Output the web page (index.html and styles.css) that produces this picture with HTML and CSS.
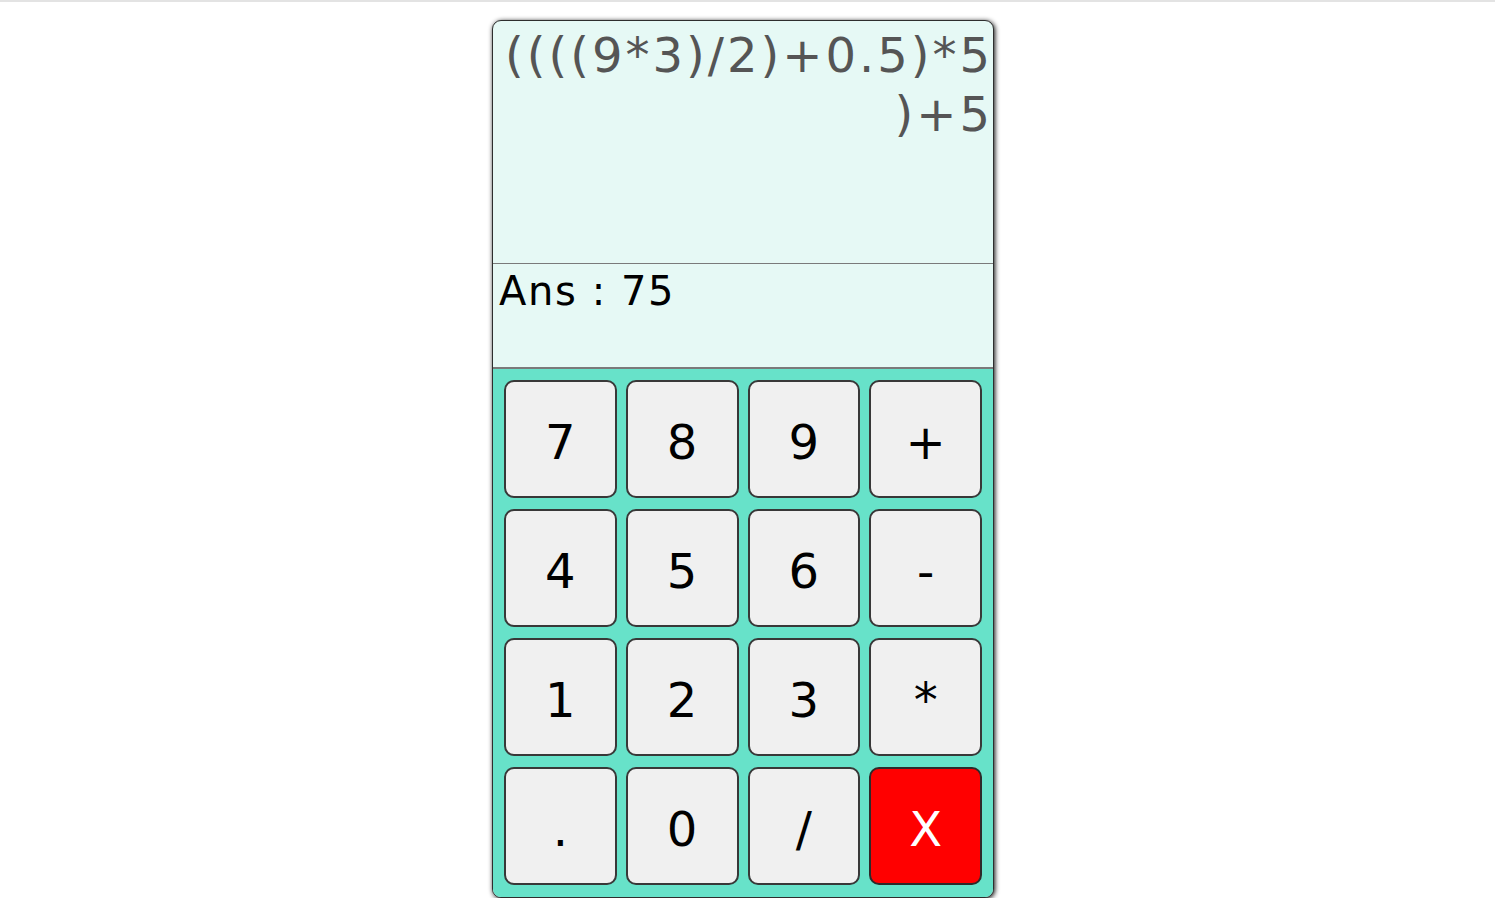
FILE: index.html
```html
<!DOCTYPE html>
<html lang="en">
<head>
<meta charset="utf-8">
<title>Calculator</title>
<link rel="stylesheet" href="styles.css">
</head>
<body>
<div class="topline"></div>
<div class="calc">
  <div class="expr">((((9*3)/2)+0.5)*5)+5</div>
  <div class="ans">Ans : 75</div>
  <div class="keypad">
    <button class="key">7</button>
    <button class="key">8</button>
    <button class="key">9</button>
    <button class="key">+</button>
    <button class="key">4</button>
    <button class="key">5</button>
    <button class="key">6</button>
    <button class="key">-</button>
    <button class="key">1</button>
    <button class="key">2</button>
    <button class="key">3</button>
    <button class="key">*</button>
    <button class="key">.</button>
    <button class="key">0</button>
    <button class="key">/</button>
    <button class="key key-clear">X</button>
  </div>
</div>
</body>
</html>
```
FILE: styles.css
```css
html, body {
  margin: 0;
  padding: 0;
  background: #ffffff;
}

body {
  font-family: "DejaVu Sans", Verdana, sans-serif;
}

.topline {
  height: 2px;
  background: #e3e3e3;
}

.calc {
  width: 500px;
  margin: 18px 0 0 492px;
  border: 1px solid #2e2e2e;
  border-radius: 9px;
  overflow: hidden;
  box-shadow: 1px 1px 5px rgba(0, 0, 0, 0.95);
  display: flex;
  flex-direction: column;
  background: #e6f9f5;
}

.expr {
  height: 243px;
  box-sizing: border-box;
  padding: 5px 0 0 6px;
  border-bottom: 1px solid #7a7a7a;
  font-size: 48px;
  line-height: 59px;
  letter-spacing: 3px;
  color: #555555;
  text-align: right;
  word-break: break-all;
  line-break: anywhere;
}

.ans {
  height: 105px;
  box-sizing: border-box;
  padding: 4px 0 0 6px;
  border-bottom: 2px solid #7a7a7a;
  font-size: 40px;
  line-height: 46px;
  letter-spacing: 1.6px;
  color: #000000;
}

.keypad {
  display: grid;
  grid-template-columns: repeat(4, 1fr);
  grid-template-rows: repeat(4, 118px);
  gap: 11px 9px;
  padding: 11px 11px 12px 11px;
  background: #67e2c9;
}

.key {
  margin: 0;
  padding: 6px 0 0 0;
  border: 2px solid #383838;
  border-radius: 10px;
  background: #f0f0f0;
  color: #000000;
  font-family: "DejaVu Sans", Verdana, sans-serif;
  font-size: 48px;
  line-height: 1;
  cursor: pointer;
}

.key-clear {
  background: #ff0000;
  color: #ffffff;
  border-color: #2e2a2a;
}
```
